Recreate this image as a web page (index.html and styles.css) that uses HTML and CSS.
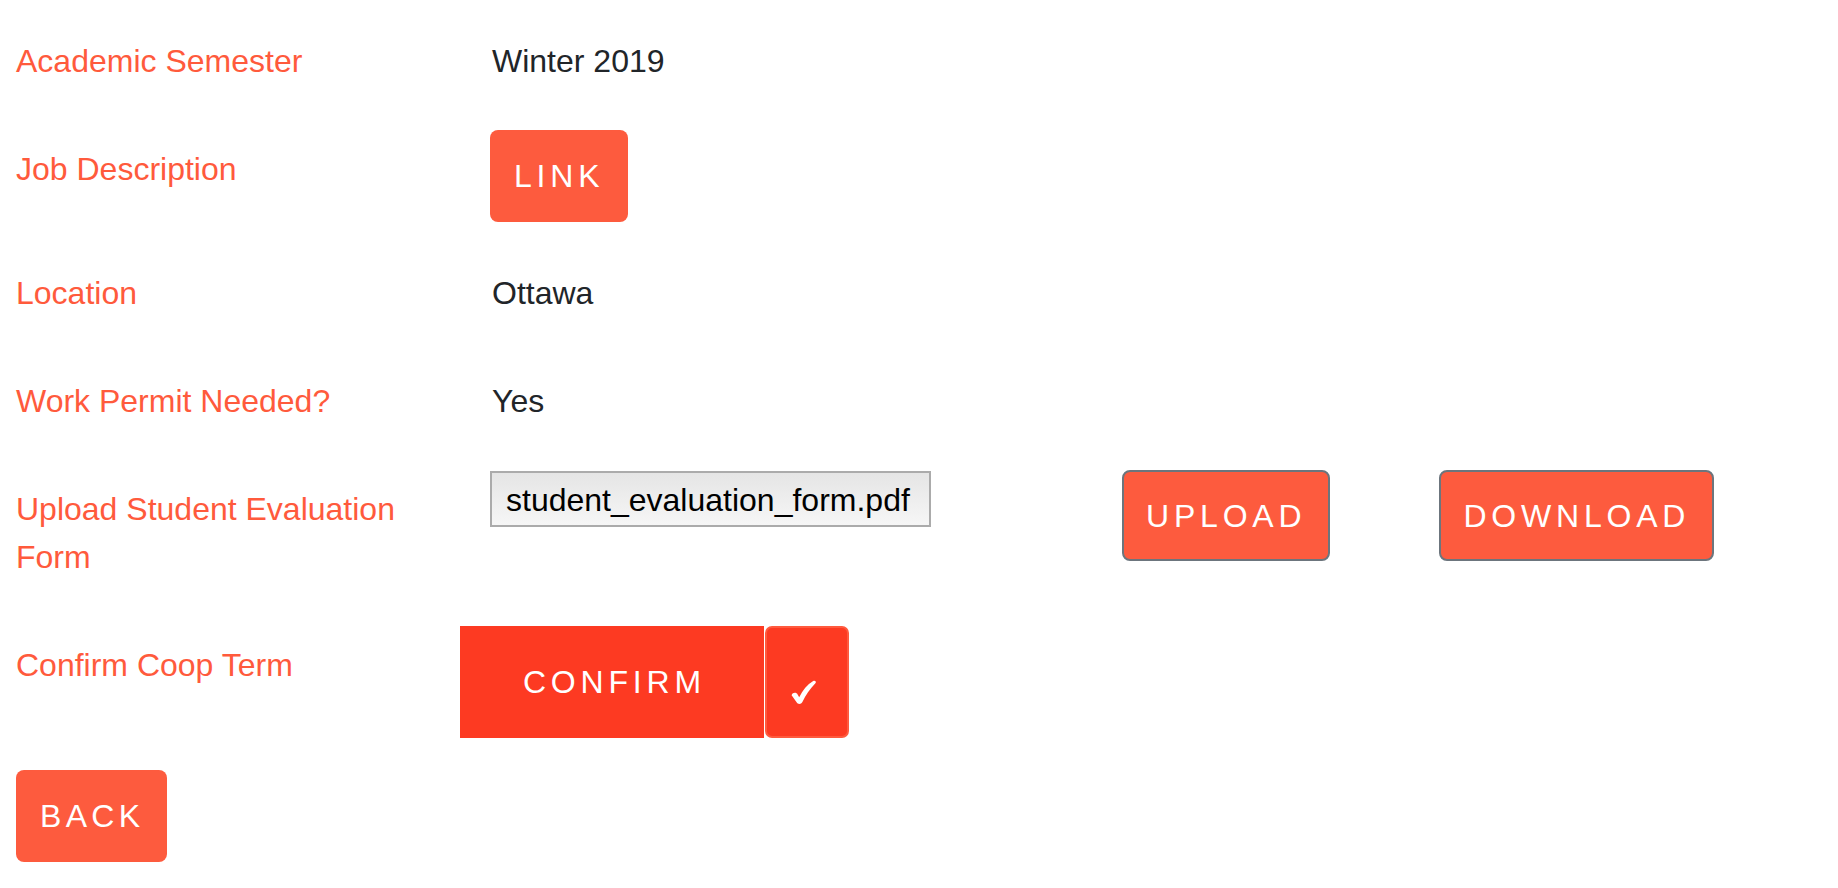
FILE: index.html
```html
<!DOCTYPE html>
<html lang="en">
<head>
<meta charset="utf-8">
<title>Coop Term</title>
<link rel="stylesheet" href="styles.css">
</head>
<body>
<main class="form">
  <div class="row">
    <div class="label">Academic Semester</div>
    <div class="value text">Winter 2019</div>
  </div>
  <div class="row">
    <div class="label">Job Description</div>
    <div class="value"><a class="btn btn-link" href="#">LINK</a></div>
  </div>
  <div class="row">
    <div class="label">Location</div>
    <div class="value text">Ottawa</div>
  </div>
  <div class="row">
    <div class="label">Work Permit Needed?</div>
    <div class="value text">Yes</div>
  </div>
  <div class="row">
    <div class="label">Upload Student Evaluation Form</div>
    <div class="value files">
      <div class="file-box">student_evaluation_form.pdf</div>
      <button class="btn btn-outline btn-upload">UPLOAD</button>
      <button class="btn btn-outline btn-download">DOWNLOAD</button>
    </div>
  </div>
  <div class="row">
    <div class="label">Confirm Coop Term</div>
    <div class="value confirm-group">
      <button class="btn-confirm">CONFIRM</button>
      <button class="btn-check" aria-label="confirmed">
        <svg width="26" height="25" viewBox="0 0 26 25"><path d="M0.6 15.2 C1.6 12.6 5 11.9 6.6 14.4 L8.2 17.2 C11.7 10.2 16.2 4.6 22.2 1 C24 0 25.7 1.7 24.4 3.3 C18.7 9.1 14.7 15.1 11.4 22 C10.2 24.4 6.8 24.6 5.6 22.2 Z" fill="#ffffff"/></svg>
      </button>
    </div>
  </div>
  <div class="actions">
    <a class="btn btn-back" href="#">BACK</a>
  </div>
</main>
</body>
</html>
```

FILE: styles.css
```css
* {
  box-sizing: border-box;
}

html, body {
  margin: 0;
  padding: 0;
  background: #ffffff;
}

body {
  font-family: "Liberation Sans", Arial, Helvetica, sans-serif;
  font-size: 32px;
  line-height: 48px;
  color: #212529;
}

.form {
  padding-top: 22px;
}

.row {
  display: grid;
  grid-template-columns: 460px 1fr;
  align-items: start;
  margin-bottom: 32px;
}

.label {
  padding: 15px 30px 13px 16px;
  color: #ff5a3c;
}

.value {
  padding-left: 30px;
}

.value.text {
  padding-top: 15px;
  padding-bottom: 13px;
  padding-left: 32px;
  color: #212529;
}

.btn {
  display: inline-block;
  font-family: "Liberation Sans", Arial, Helvetica, sans-serif;
  font-size: 32px;
  line-height: 48px;
  letter-spacing: 4.8px;
  color: #ffffff;
  background: #fd5b3e;
  border: none;
  border-radius: 8px;
  text-decoration: none;
  text-align: center;
  cursor: pointer;
}

.btn-link {
  padding: 22px 24px;
}

.btn-back {
  padding: 22px 23px 22px 24px;
  letter-spacing: 4.3px;
}

.btn-outline {
  border: 2px solid #6c757d;
  padding: 19.5px 22px;
}

.files {
  display: flex;
  align-items: flex-start;
}

.file-box {
  width: 441px;
  height: 56px;
  margin-top: 1px;
  padding: 1px 14px 0;
  line-height: 52px;
  color: #000000;
  border: 2px solid #ababab;
  background: linear-gradient(#e5e5e5, #f6f6f6);
  white-space: nowrap;
}

.btn-upload {
  margin-left: 191px;
}

.btn-download {
  margin-left: 109px;
}

.confirm-group {
  display: flex;
  padding-left: 0;
}

.btn-confirm {
  width: 304px;
  height: 112px;
  padding: 0;
  border: none;
  background: #fd3a22;
  color: #ffffff;
  font-family: "Liberation Sans", Arial, Helvetica, sans-serif;
  font-size: 32px;
  line-height: 48px;
  letter-spacing: 4.8px;
  text-indent: 4.8px;
  cursor: pointer;
}

.btn-check {
  width: 84px;
  height: 112px;
  margin-left: 1px;
  padding: 20px 6px 0 0;
  display: flex;
  align-items: center;
  justify-content: center;
  background: #fd3a22;
  border: 2px solid #ff5a3e;
  border-radius: 7px;
  cursor: pointer;
}

.actions {
  padding-left: 16px;
}
```
